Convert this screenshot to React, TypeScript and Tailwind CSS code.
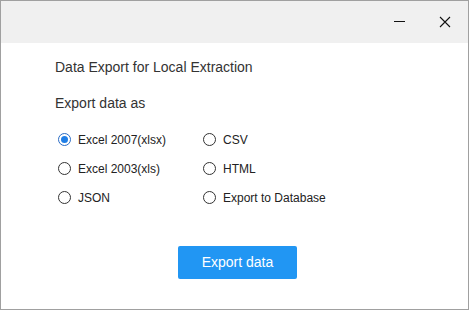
import React, { useState } from "react";

const options: [string, string][] = [
  ["Excel 2007(xlsx)", "CSV"],
  ["Excel 2003(xls)", "HTML"],
  ["JSON", "Export to Database"],
];

function Radio({ label, checked, onClick }: { label: string; checked: boolean; onClick: () => void }) {
  return (
    <button type="button" onClick={onClick} className="flex items-center gap-[7px] text-left">
      <span
        className={
          checked
            ? "flex h-[13px] w-[13px] items-center justify-center rounded-full border border-[#2b6cc4] bg-white"
            : "flex h-[13px] w-[13px] items-center justify-center rounded-full border border-[#333333] bg-white"
        }
      >
        {checked && <span className="h-[7px] w-[7px] rounded-full bg-[#1f7ee6]" />}
      </span>
      <span className="text-[12px] leading-[16px] text-[#222222]">{label}</span>
    </button>
  );
}

export default function App() {
  const [sel, setSel] = useState("Excel 2007(xlsx)");
  return (
    <div
      className="flex h-[310px] w-[469px] flex-col border border-[#a0a0a0] bg-white"
      style={{ fontFamily: '"Liberation Sans", Arial, sans-serif' }}
    >
      <div className="relative h-[42px] shrink-0 bg-[#f0f0f0]">
        <span className="absolute left-[393px] top-[20px] h-px w-[11px] bg-[#111111]" />
        <svg className="absolute left-[438px] top-[15px]" width="12" height="12" viewBox="0 0 12 12">
          <path d="M1 1 L11 11 M11 1 L1 11" stroke="#111111" strokeWidth="1.1" fill="none" />
        </svg>
      </div>
      <div className="flex flex-col pl-[54px] pt-[16px]">
        <div className="text-[14px] leading-[16px] text-[#333333]">Data Export for Local Extraction</div>
        <div className="mt-[20px] text-[14px] leading-[16px] text-[#333333]">Export data as</div>
        <div className="mt-[14px] flex flex-col pl-[3px]">
          {options.map(([a, b]) => (
            <div key={a} className="flex h-[29px] items-center">
              <div className="w-[145px]">
                <Radio label={a} checked={sel === a} onClick={() => setSel(a)} />
              </div>
              <Radio label={b} checked={sel === b} onClick={() => setSel(b)} />
            </div>
          ))}
        </div>
        <button
          type="button"
          className="mt-[34px] ml-[123px] h-[33px] w-[119px] rounded-[2px] bg-[#2196f3] text-[14px] text-white"
        >
          Export data
        </button>
      </div>
    </div>
  );
}
